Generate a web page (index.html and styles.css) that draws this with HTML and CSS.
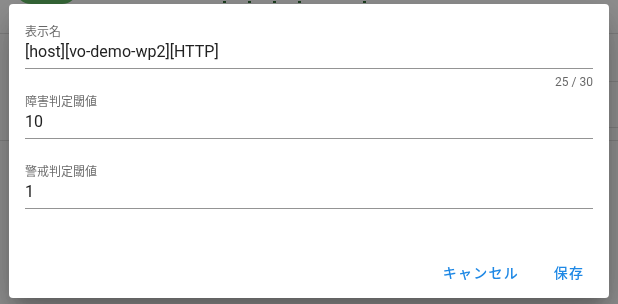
FILE: index.html
```html
<!DOCTYPE html>
<html lang="ja">
<head>
<meta charset="utf-8">
<title>表示名の編集</title>
<link rel="stylesheet" href="styles.css">
</head>
<body>
<div class="page">
  <header class="appbar">
    <div class="chip"><span class="avatar"></span></div>
    <div class="title-marks">
      <span class="mark"></span><span class="mark"></span><span class="mark"></span><span class="mark"></span><span class="mark mark-far"></span>
    </div>
  </header>
  <div class="content">
    <div class="side"></div>
    <div class="main">
      <div class="row row-a"></div>
      <div class="row row-b"></div>
    </div>
  </div>
</div>

<div class="overlay">
  <div class="dialog" role="dialog">
    <div class="card-text">
      <div class="field">
        <div class="label">表示名</div>
        <div class="value">[host][vo-demo-wp2][HTTP]</div>
        <div class="details">25 / 30</div>
      </div>
      <div class="field">
        <div class="label">障害判定閾値</div>
        <div class="value">10</div>
        <div class="details"></div>
      </div>
      <div class="field">
        <div class="label">警戒判定閾値</div>
        <div class="value">1</div>
        <div class="details"></div>
      </div>
    </div>
    <div class="actions">
      <button class="btn btn-cancel" type="button">キャンセル</button>
      <button class="btn" type="button">保存</button>
    </div>
  </div>
</div>
</body>
</html>
```

FILE: styles.css
```css
* {
  box-sizing: border-box;
}

html,
body {
  margin: 0;
  height: 100%;
}

body {
  font-family: Roboto, "Noto Sans CJK JP", sans-serif;
  background: #ffffff;
  overflow: hidden;
}

/* background page (behind the overlay) */
.appbar {
  height: 34px;
  border-bottom: 1px solid #dddddd;
  display: flex;
  align-items: flex-start;
  padding-left: 15px;
}

.chip {
  width: 63px;
  height: 32px;
  margin-top: -28px;
  border-radius: 16px;
  background: #4caf50;
  display: flex;
  align-items: center;
}

.avatar {
  width: 24px;
  height: 24px;
  margin-left: 2px;
  border-radius: 50%;
  background: #1b5e20;
}

.title-marks {
  display: flex;
  gap: 22px;
  margin-left: 145px;
  padding-top: 1px;
}

.mark {
  width: 3px;
  height: 2px;
  background: #1b5e20;
}

.mark-far {
  margin-left: 40px;
}

.content {
  display: flex;
  height: 107px;
  border-bottom: 1px solid #dddddd;
}

.side {
  flex: 1;
}

.main {
  width: 320px;
}

.row {
  border-bottom: 1px solid #dddddd;
}

.row-a {
  height: 48px;
}

.row-b {
  height: 46px;
}

/* overlay + dialog */
.overlay {
  position: fixed;
  inset: 0;
  background: rgba(33, 33, 33, 0.5);
  display: flex;
  justify-content: center;
  align-items: flex-start;
  padding-top: 4px;
}

.dialog {
  width: 600px;
  background: #ffffff;
  border-radius: 4px;
  box-shadow:
    0 11px 15px -7px rgba(0, 0, 0, 0.2),
    0 24px 38px 3px rgba(0, 0, 0, 0.14),
    0 9px 46px 8px rgba(0, 0, 0, 0.12);
}

.card-text {
  padding: 20px 16px 12px;
}

.label {
  font-size: 12px;
  line-height: 16px;
  height: 16px;
  color: rgba(0, 0, 0, 0.6);
}

.value {
  margin-top: 2px;
  font-size: 16px;
  line-height: 20px;
  padding-bottom: 6px;
  color: rgba(0, 0, 0, 0.87);
  border-bottom: 1px solid rgba(0, 0, 0, 0.42);
}

.details {
  height: 25px;
  padding-top: 5px;
  font-size: 12px;
  line-height: 16px;
  text-align: right;
  color: rgba(0, 0, 0, 0.6);
}

.actions {
  display: flex;
  justify-content: flex-end;
  align-items: center;
  gap: 2px;
  padding: 8px;
}

.btn {
  height: 36px;
  min-width: 64px;
  padding: 0 16px;
  border: 0;
  border-radius: 4px;
  background: transparent;
  font-family: Roboto, "Noto Sans CJK JP", sans-serif;
  font-size: 14px;
  font-weight: 500;
  letter-spacing: 0.0892857143em;
  color: #1e88e5;
  cursor: pointer;
}
```
